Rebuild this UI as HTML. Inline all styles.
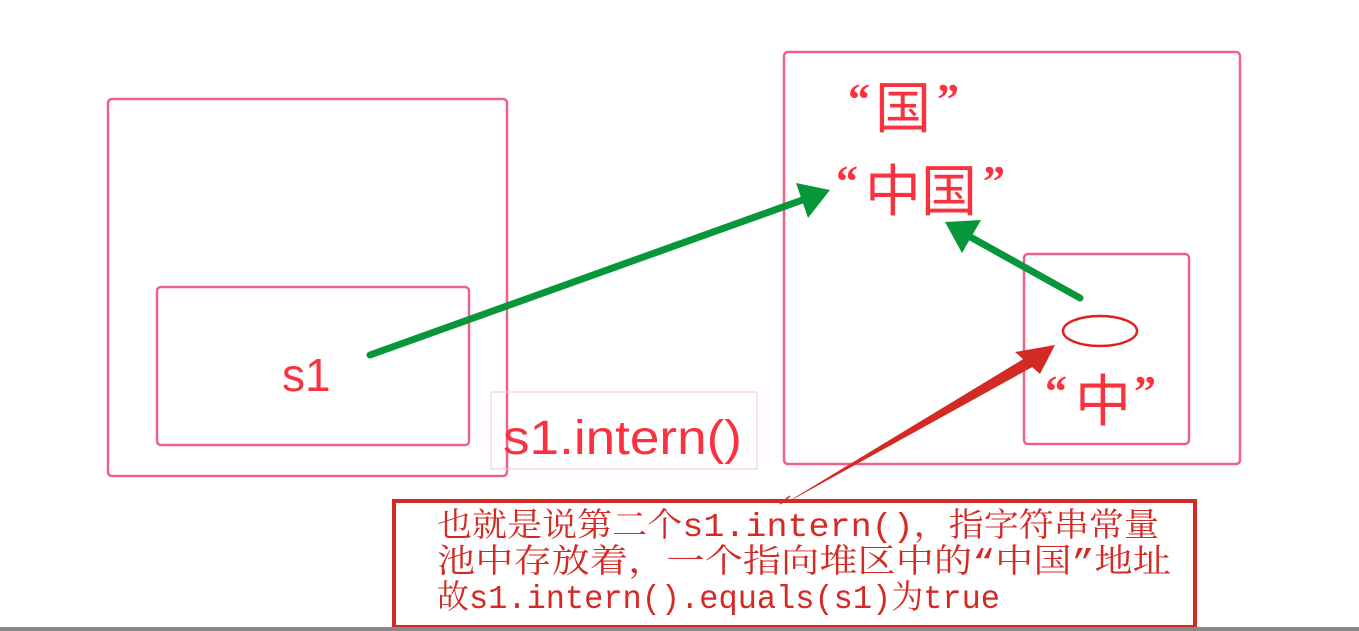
<!DOCTYPE html>
<html><head><meta charset="utf-8"><style>
html,body{margin:0;padding:0;background:#fff;width:1359px;height:631px;overflow:hidden}
svg{display:block}
.t{font-family:"Liberation Sans","Noto Sans CJK SC",sans-serif;fill:#fa3240}
.q{font-family:"Noto Sans CJK SC",sans-serif;fill:#fa3240;font-size:56px}
.p{font-family:"Liberation Serif",serif;font-weight:bold;fill:#fa3240;font-size:44px}
.c{font-family:"Liberation Mono","Noto Serif CJK SC",serif;fill:#d42a25;font-size:33px}
</style></head><body>
<svg width="1359" height="631" viewBox="0 0 1359 631">
<rect x="0" y="0" width="1359" height="631" fill="#fff"/>
<g fill="none" stroke="#f0608c" stroke-width="2.5">
<rect x="108" y="99" width="399" height="377" rx="4"/>
<rect x="157" y="287" width="312" height="158" rx="4"/>
<rect x="784" y="52" width="456" height="412" rx="4"/>
<rect x="1024" y="254" width="165" height="190" rx="4"/>
</g>
<rect x="491" y="392" width="266" height="77" fill="none" stroke="#f8c4cc" stroke-width="1"/>
<text class="t" x="282" y="391" font-size="46">s1</text>
<text class="t" x="503" y="454" font-size="48" textLength="239" lengthAdjust="spacingAndGlyphs">s1.intern()</text>
<text class="p" x="848" y="114">“</text><text class="q" x="875" y="128">国</text><text class="p" x="937" y="114">”</text>
<text class="p" x="836" y="196">“</text><text class="q" x="865" y="211">中</text><text class="q" x="921" y="211">国</text><text class="p" x="983" y="196">”</text>
<text class="p" x="1045" y="406">“</text><text class="q" x="1075" y="421">中</text><text class="p" x="1134" y="406">”</text>
<ellipse cx="1100" cy="331" rx="37" ry="15" fill="none" stroke="#e02020" stroke-width="2.5"/>
<line x1="370" y1="355" x2="808" y2="198" stroke="#07973a" stroke-width="7" stroke-linecap="round"/>
<polygon points="830,190 796,183 808,218" fill="#07973a"/>
<line x1="1080" y1="298" x2="965" y2="234" stroke="#07973a" stroke-width="7" stroke-linecap="round"/>
<polygon points="945,222 981,220 962,253" fill="#07973a"/>
<polygon points="779,507 1030,355 1036,365" fill="#d42a25"/>
<polygon points="1055,345 1015,352 1040,374" fill="#d42a25"/>
<rect x="394" y="501" width="801" height="126" fill="#fff" stroke="#d42a25" stroke-width="4"/>
<line x1="780" y1="504" x2="790" y2="496" stroke="#d42a25" stroke-width="1.5"/>
<text class="c" x="437" y="536" textLength="722" lengthAdjust="spacingAndGlyphs">也就是说第二个s1.intern()，指字符串常量</text>
<text class="c" x="437" y="572" textLength="734" lengthAdjust="spacingAndGlyphs">池中存放着，一个指向堆区中的“中国”地址</text>
<text class="c" x="437" y="608" textLength="563" lengthAdjust="spacingAndGlyphs">故s1.intern().equals(s1)为true</text>
<rect x="0" y="627" width="1359" height="4" fill="#888"/>
</svg>
</body></html>
